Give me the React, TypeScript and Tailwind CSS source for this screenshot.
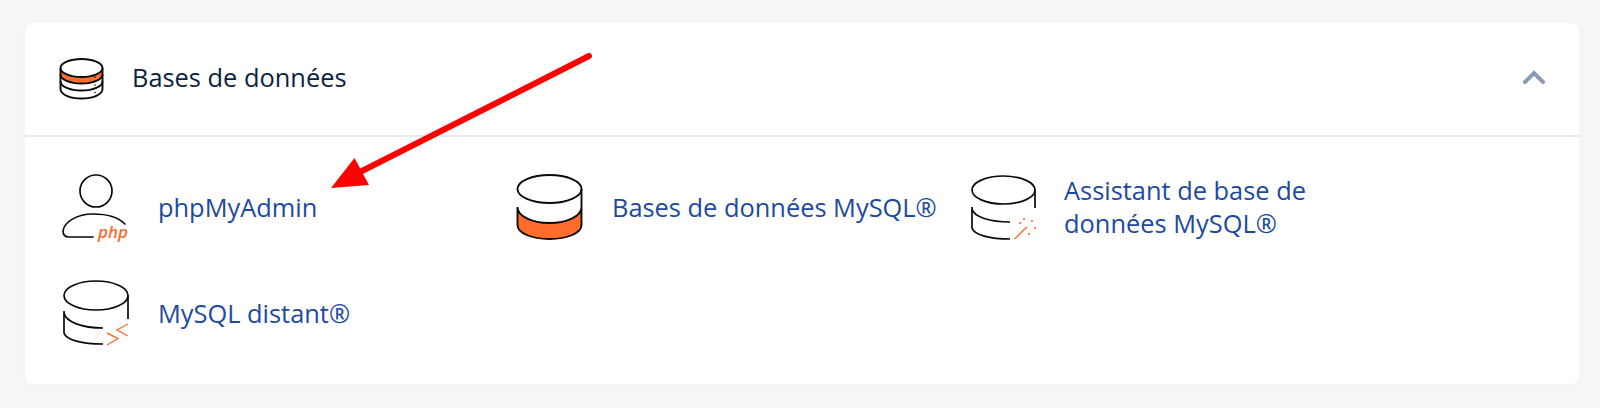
import React from 'react';

const ORANGE = '#ff6c2c';
const INK = '#0a0a0a';

const HeaderIcon: React.FC = () => (
  <svg viewBox="58 57 48 44" className="w-12 h-11 shrink-0 mt-[3px]" fill="none" stroke={INK} strokeWidth="1.9">
    <path d="M60.500 68v6c0 5 9.500 9 21 9s21-4 21-9v-6z" fill={ORANGE} stroke="none" />
    <ellipse cx="81.500" cy="68" rx="21" ry="9" fill="#fff" />
    <path d="M60.500 68v21c0 5.500 9.500 9.500 21 9.500s21-4 21-9.500V68" />
    <path d="M60.500 74.500c0 5 9.500 9 21 9s21-4 21-9" />
    <path d="M60.500 81.500c0 5 9.500 9 21 9s21-4 21-9" />
    <circle cx="95" cy="77" r="0.8" fill={INK} stroke="none" />
    <circle cx="95" cy="85" r="0.8" fill={INK} stroke="none" />
    <circle cx="95" cy="92.500" r="0.8" fill={INK} stroke="none" />
  </svg>
);

const PhpIcon: React.FC = () => (
  <svg viewBox="60 171 72 72" className="w-[72px] h-[72px] shrink-0" fill="none" stroke={INK} strokeWidth="1.7">
    <circle cx="96" cy="191" r="16" />
    <path d="M125 224c-6-6-18-10-32-10c-16 0-29 8-30 17c0 4 2 6 6 6h24" strokeLinecap="round" />
    <text
      x="98"
      y="238"
      fill={ORANGE}
      stroke="none"
      fontSize="17"
      fontWeight="600"
      fontStyle="italic"
      fontFamily="'Open Sans', sans-serif"
    >
      php
    </text>
  </svg>
);

const MysqlIcon: React.FC = () => (
  <svg viewBox="514 171 72 72" className="w-[72px] h-[72px] shrink-0" fill="none" stroke={INK} strokeWidth="1.9">
    <path d="M517.500 207c0 9 14 16 32 16s32-7 32-16v18c0 8-14 14-32 14s-32-6-32-14z" fill={ORANGE} stroke="none" />
    <ellipse cx="549.500" cy="189" rx="32" ry="14" />
    <path d="M581.500 189v36c0 8-14 14-32 14s-32-6-32-14v-18c0 9 14 16 32 16s32-7 32-16" />
  </svg>
);

const AssistantIcon: React.FC = () => (
  <svg viewBox="966 171 72 72" className="w-[72px] h-[72px] shrink-0" fill="none" stroke={INK} strokeWidth="1.7">
    <ellipse cx="1003.500" cy="190" rx="31.500" ry="14" />
    <path d="M1035 190v18" />
    <path d="M972 207v21c2 7 18 11 38 11" />
    <path d="M972 209c2 8 18 13 38 13" />
    <path d="M1014.500 239L1027 227" stroke={ORANGE} strokeWidth="1.4" />
    <g fill={ORANGE} stroke="none">
      <circle cx="1024" cy="219" r="1.1" />
      <circle cx="1032" cy="221" r="1.1" />
      <circle cx="1020" cy="223" r="1.1" />
      <circle cx="1035" cy="228" r="1.1" />
      <circle cx="1029" cy="234" r="1.1" />
    </g>
  </svg>
);

const RemoteIcon: React.FC = () => (
  <svg viewBox="60 277 72 72" className="w-[72px] h-[72px] shrink-0" fill="none" stroke={INK} strokeWidth="1.7">
    <ellipse cx="96" cy="295.500" rx="32" ry="14.500" />
    <path d="M128 295.500V319" />
    <path d="M64 311v22c2 7 18 11 39 11" />
    <path d="M64 313c2 9 18 15 39 15" />
    <path d="M128 324l-11 6l11 6M107 333l11 5.500l-11 6.500" stroke={ORANGE} strokeWidth="1.4" />
  </svg>
);

const items = [
  { label: 'phpMyAdmin', icon: <PhpIcon /> },
  { label: 'Bases de données MySQL®', icon: <MysqlIcon /> },
  { label: 'Assistant de base de données MySQL®', icon: <AssistantIcon /> },
  { label: 'MySQL distant®', icon: <RemoteIcon /> },
];

export default function App() {
  return (
    <div className="relative h-[408px] w-[1600px] overflow-hidden bg-[#f6f6f6] pt-[23px] pl-[25px] font-['Open_Sans',sans-serif]">
      <section className="w-[1554px] h-[361px] rounded-lg bg-white shadow-[0_2px_16px_rgba(0,0,0,0.015)]">
        <header className="flex h-[114px] items-center justify-between border-b-2 border-[#e6eaf2] px-[33px] pb-[4px]">
          <div className="flex items-center gap-[26px]">
            <HeaderIcon />
            <h2 className="text-[25.4px] font-normal text-[#0c1f44]">Bases de données</h2>
          </div>
          <svg viewBox="0 0 24 16" className="w-6 h-4" fill="none" stroke="#8a9ab6" strokeWidth="4" strokeLinecap="round">
            <path d="M3 13L12 4L21 13" />
          </svg>
        </header>
        <div className="grid grid-cols-[454px_452px_454px] auto-rows-[106px] pl-[35px] pt-[17px]">
          {items.map((item) => (
            <a key={item.label} className="flex items-center gap-[26px] text-[25.4px] leading-[33px] text-[#1d4a9f]">
              {item.icon}
              <span className="max-w-[340px]">{item.label}</span>
            </a>
          ))}
        </div>
      </section>

      {/* red annotation arrow drawn over the screenshot */}
      <svg className="absolute top-0 left-0 w-[1600px] h-[408px] pointer-events-none" viewBox="0 0 1600 408" fill="none">
        <path d="M589 56L360 172" stroke="#ff0000" strokeWidth="6" strokeLinecap="round" />
        <path d="M331 188L354.500 158L369 185z" fill="#ff0000" />
      </svg>
    </div>
  );
}
